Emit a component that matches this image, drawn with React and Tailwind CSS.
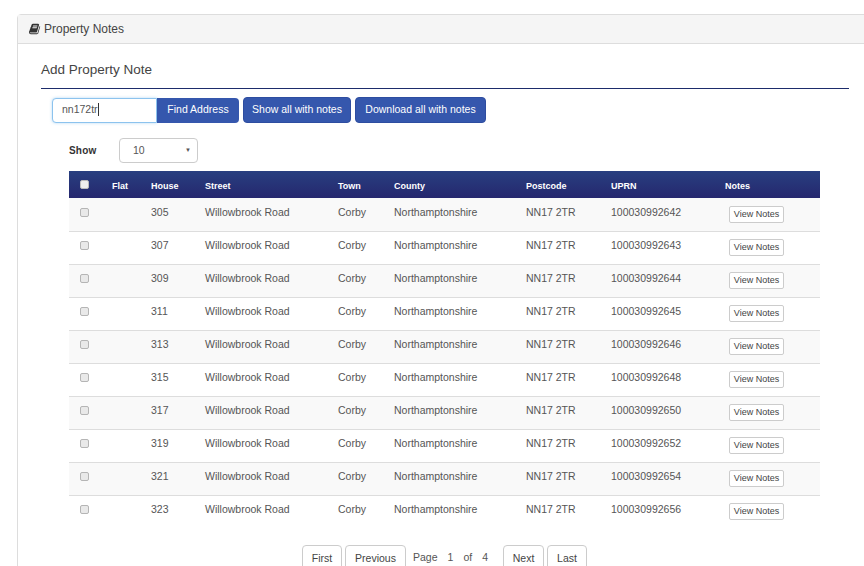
const rows = [
  ['305', '100030992642'],
  ['307', '100030992643'],
  ['309', '100030992644'],
  ['311', '100030992645'],
  ['313', '100030992646'],
  ['315', '100030992648'],
  ['317', '100030992650'],
  ['319', '100030992652'],
  ['321', '100030992654'],
  ['323', '100030992656'],
];

const headers = ['Flat', 'House', 'Street', 'Town', 'County', 'Postcode', 'UPRN', 'Notes'];
const colWidths = ['w-[35px]', 'w-[39px]', 'w-[54px]', 'w-[133px]', 'w-[56px]', 'w-[132px]', 'w-[85px]', 'w-[114px]', 'w-[103px]'];

function BookIcon() {
  return (
    <svg viewBox="0 0 1792 1792" className="h-[12px] w-[12px] fill-[#333]">
      <path d="M1639 478q40 57 18 129l-275 906q-19 64-76.5 107.5t-122.5 43.5h-923q-77 0-148.5-53.5t-99.5-131.5q-24-67-2-127 0-4 3-27t4-37q1-8-3-21.5t-3-19.5q2-11 8-21t16.5-23.5 16.5-23.5q23-38 45-91.5t30-91.5q3-10 .5-30t-.5-28q3-11 17-28t17-23q21-36 42-92t25-90q1-9-2.5-32t.5-28q4-13 22-30.5t22-22.5q19-26 42.5-84.5t27.5-96.5q1-8-3-25.5t-2-26.5q2-8 9-18t18-23 17-21q8-12 16.5-30.5t15-35 16-36 19.5-32 26.5-23.5 36-11.5 47.5 5.5l-1 3q38-9 51-9h761q74 0 114 56t18 130l-274 906q-36 119-71.5 153.5t-128.5 34.5h-869q-27 0-38 15-11 16-1 43 24 70 144 70h923q29 0 56-15.5t35-41.5l300-987q7-22 5-57 38 15 59 43zm-1064 2q-4 13 2 22.5t20 9.5h608q13 0 25.5-9.5t16.5-22.5l21-64q4-13-2-22.5t-20-9.5h-608q-13 0-25.5 9.5t-16.5 22.5zm-83 256q-4 13 2 22.5t20 9.5h608q13 0 25.5-9.5t16.5-22.5l21-64q4-13-2-22.5t-20-9.5h-608q-13 0-25.5 9.5t-16.5 22.5z" />
    </svg>
  );
}

function Checkbox() {
  return <span className="ml-[1px] block h-[9px] w-[9px] -translate-y-[2px] rounded-[2px] border border-[#b5b5b5] bg-[#e9e9e9]" />;
}

function PageButton({ label, width }) {
  return (
    <button className={`h-[34px] ${width} self-start rounded-[4px] border border-[#ccc] bg-white pb-[6px] text-[10.5px] text-[#444]`}>
      {label}
    </button>
  );
}

export default function App() {
  return (
    <div className="h-[566px] w-[864px] overflow-hidden bg-white pt-[14px] pl-[17px] font-['Liberation_Sans',Arial,sans-serif] text-[#333]">
      <div className="w-[880px] rounded-[4px] border border-[#ddd] bg-white">
        <div className="flex h-[29px] items-center gap-[3px] border-b border-[#ddd] bg-[#f5f5f5] pl-[11px] text-[12px] text-[#444]">
          <BookIcon />
          <span>Property Notes</span>
        </div>

        <div className="pl-[23px] pt-[16px]">
          <h3 className="text-[13.5px] leading-[20px] text-[#444]">Add Property Note</h3>
          <div className="mt-[8px] w-[808px] border-t border-[#1d2c6b]" />

          <div className="ml-[11px] mt-[8px] flex items-center">
            <div className="flex h-[25px] w-[105px] items-center rounded-l-[4px] border border-[#8cc3ee] bg-white pb-[1px] pl-[9px] text-[10.5px] text-[#555] shadow-[0_0_3px_rgba(102,175,233,0.5)]">
              nn172tr<span className="h-[13px] w-px bg-[#333]" />
            </div>
            <button className="h-[25px] w-[82px] rounded-r-[4px] bg-[#3557ad] text-[10.5px] text-white">Find Address</button>
            <button className="ml-[4px] h-[26px] w-[108px] rounded-[4px] border border-[#2e4da0] bg-[#3557ad] text-[10.5px] text-white">Show all with notes</button>
            <button className="ml-[4px] h-[26px] w-[131px] rounded-[4px] border border-[#2e4da0] bg-[#3557ad] text-[10.5px] text-white">Download all with notes</button>
          </div>

          <div className="ml-[28px] mt-[15px] flex items-center">
            <span className="w-[50px] text-[10px] font-bold tracking-[0.2px]">Show</span>
            <div className="flex h-[25px] w-[79px] items-center justify-between rounded-[4px] border border-[#ccc] bg-white pl-[13px] pr-[6px] text-[10.5px] text-[#555]">
              <span>10</span>
              <span className="text-[6px]">▼</span>
            </div>
          </div>

          <table className="ml-[28px] mt-[8px] w-[751px] table-fixed border-collapse text-[10.5px] text-[#555]">
            <colgroup>
              {colWidths.map((w, i) => (
                <col key={i} className={w} />
              ))}
            </colgroup>
            <thead>
              <tr className="h-[27px] bg-gradient-to-b from-[#283f80] to-[#25276e] text-left text-[9px] text-white">
                <th className="pl-[11px]">
                  <span className="block h-[9px] w-[9px] rounded-[2px] border border-[#bbb] bg-[#eee]" />
                </th>
                {headers.map((h) => (
                  <th key={h} className="pl-[8px] pt-[5px] font-bold">{h}</th>
                ))}
              </tr>
            </thead>
            <tbody>
              {rows.map(([house, uprn], i) => (
                <tr key={uprn} className={`h-[33px] ${i > 0 ? 'border-t border-[#ddd]' : ''} ${i % 2 === 0 ? 'bg-[#f9f9f9]' : 'bg-white'}`}>
                  <td className="pl-[10px]"><Checkbox /></td>
                  <td />
                  <td className="pb-[3px] pl-[8px]">{house}</td>
                  <td className="pb-[3px] pl-[8px]">Willowbrook Road</td>
                  <td className="pb-[3px] pl-[8px]">Corby</td>
                  <td className="pb-[3px] pl-[8px]">Northamptonshire</td>
                  <td className="pb-[3px] pl-[8px]">NN17 2TR</td>
                  <td className="pb-[3px] pl-[8px]">{uprn}</td>
                  <td className="pl-[12px]">
                    <button className="block h-[17px] w-[55px] rounded-[2px] border border-[#ccc] bg-white text-[9px] text-[#444]">View Notes</button>
                  </td>
                </tr>
              ))}
            </tbody>
          </table>

          <div className="ml-[261px] mt-[17px] flex text-[11px]">
            <PageButton label="First" width="w-[40px]" />
            <div className="ml-[3px]"><PageButton label="Previous" width="w-[61px]" /></div>
            <div className="ml-[7px] flex w-[90px] gap-[10px] pt-[5px] text-[10.5px] text-[#555]">
              <span>Page</span><span>1</span><span>of</span><span>4</span>
            </div>
            <PageButton label="Next" width="w-[41px]" />
            <div className="ml-[3px]"><PageButton label="Last" width="w-[40px]" /></div>
          </div>
        </div>
      </div>
    </div>
  );
}
